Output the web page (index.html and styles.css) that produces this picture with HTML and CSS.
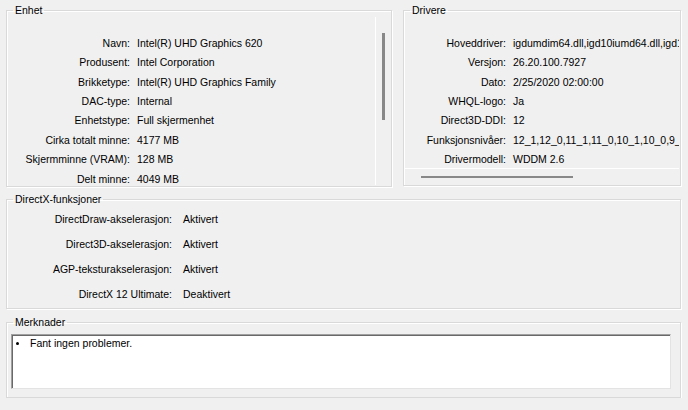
FILE: index.html
```html
<!DOCTYPE html>
<html lang="nb">
<head>
  <meta charset="UTF-8">
  <title>DirectX-diagnoseverktøy - Skjerm</title>
  <link rel="stylesheet" href="styles.css">
</head>
<body>
<div class="page">
  <div class="top-row">
    <fieldset class="group device">
      <legend>Enhet</legend>
      <div class="scroll-area">
        <div class="props props-device">
          <span class="key">Navn:</span><span class="val">Intel(R) UHD Graphics 620</span>
          <span class="key">Produsent:</span><span class="val">Intel Corporation</span>
          <span class="key">Brikketype:</span><span class="val">Intel(R) UHD Graphics Family</span>
          <span class="key">DAC-type:</span><span class="val">Internal</span>
          <span class="key">Enhetstype:</span><span class="val">Full skjermenhet</span>
          <span class="key">Cirka totalt minne:</span><span class="val">4177 MB</span>
          <span class="key">Skjermminne (VRAM):</span><span class="val">128 MB</span>
          <span class="key">Delt minne:</span><span class="val">4049 MB</span>
        </div>
        <div class="vbar"><div class="vthumb"></div></div>
      </div>
    </fieldset>

    <fieldset class="group drivers">
      <legend>Drivere</legend>
      <div class="scroll-area-h">
        <div class="props props-drivers">
          <span class="key">Hoveddriver:</span><span class="val">igdumdim64.dll,igd10iumd64.dll,igd10iumd64.dll,igd12umd64.dll</span>
          <span class="key">Versjon:</span><span class="val">26.20.100.7927</span>
          <span class="key">Dato:</span><span class="val">2/25/2020 02:00:00</span>
          <span class="key">WHQL-logo:</span><span class="val">Ja</span>
          <span class="key">Direct3D-DDI:</span><span class="val">12</span>
          <span class="key">Funksjonsnivåer:</span><span class="val">12_1,12_0,11_1,11_0,10_1,10_0,9_3,9_2,9_1</span>
          <span class="key">Drivermodell:</span><span class="val">WDDM 2.6</span>
        </div>
      </div>
      <div class="hbar"><div class="hthumb"></div></div>
    </fieldset>
  </div>

  <fieldset class="group features">
    <legend>DirectX-funksjoner</legend>
    <div class="props props-features">
      <span class="key">DirectDraw-akselerasjon:</span><span class="val">Aktivert</span>
      <span class="key">Direct3D-akselerasjon:</span><span class="val">Aktivert</span>
      <span class="key">AGP-teksturakselerasjon:</span><span class="val">Aktivert</span>
      <span class="key">DirectX 12 Ultimate:</span><span class="val">Deaktivert</span>
    </div>
  </fieldset>

  <fieldset class="group notes">
    <legend>Merknader</legend>
    <div class="notes-box">
      <ul class="notes-list">
        <li>Fant ingen problemer.</li>
      </ul>
    </div>
  </fieldset>
</div>
</body>
</html>
```

FILE: styles.css
```css
* {
  box-sizing: border-box;
}
body {
  margin: 0;
  background: #f0f0f0;
  font-family: "Liberation Sans", Arial, sans-serif;
  font-size: 10.5px;
  color: #000;
}
.page {
  padding: 3px 7px 0 6px;
  width: 688px;
}
.top-row {
  display: flex;
  gap: 11px;
}
.group {
  margin: 0;
  padding: 0;
  border: 1px solid #d9d9d9;
  box-shadow: inset 1px 1px 0 #fff, 1px 1px 0 #fff;
  min-width: 0;
}
.group legend {
  margin-left: 6px;
  padding: 0 2px;
  line-height: 14px;
  font-size: 10.5px;
}
.device {
  width: 386px;
  height: 184px;
}
.drivers {
  flex: 1;
  height: 183px;
  display: flex;
  flex-direction: column;
}
.scroll-area {
  display: flex;
  height: 168px;
  margin-right: 1px;
}
.props {
  display: grid;
  column-gap: 7px;
  align-content: start;
  white-space: nowrap;
}
.props .key {
  text-align: right;
}
.props-device {
  grid-template-columns: 123px auto;
  grid-auto-rows: 19.43px;
  align-items: center;
  padding-top: 16px;
  flex: 1;
  overflow: hidden;
  border-right: 1px solid #fff;
}
.vbar {
  width: 14px;
  padding-top: 16px;
  display: flex;
  justify-content: center;
}
.vthumb {
  width: 3px;
  height: 87px;
  background: #888;
}
.scroll-area-h {
  flex: 1;
  overflow: hidden;
  border-bottom: 1px solid #fff;
  margin-right: 1px;
}
.props-drivers {
  grid-template-columns: 102px auto;
  grid-auto-rows: 19.43px;
  align-items: center;
  padding-top: 16px;
}
.hbar {
  height: 16px;
  padding-left: 17px;
  display: flex;
  align-items: center;
}
.hthumb {
  width: 152px;
  height: 2px;
  background: #888;
}
.features {
  margin-top: 5px;
  height: 117px;
}
.props-features {
  grid-template-columns: 165px auto;
  column-gap: 11px;
  grid-auto-rows: 25px;
  align-items: center;
}
.notes {
  margin-top: 6px;
  height: 83px;
}
.notes-box {
  margin: 5px 9px 0 4px;
  height: 55px;
  background: #fff;
  border-top: 1px solid #a0a0a0;
  border-left: 1px solid #a0a0a0;
  border-right: 1px solid #e3e3e3;
  border-bottom: 1px solid #e3e3e3;
  box-shadow: inset 1px 1px 0 #696969;
}
.notes-list {
  margin: 0;
  padding: 2px 0 0 18px;
  list-style: none;
}
.notes-list li {
  position: relative;
}
.notes-list li::before {
  content: "";
  position: absolute;
  left: -14px;
  top: 5px;
  width: 3px;
  height: 3px;
  border-radius: 50%;
  background: #000;
}
```
